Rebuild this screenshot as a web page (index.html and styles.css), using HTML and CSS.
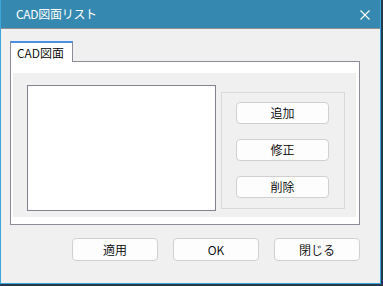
FILE: index.html
```html
<!DOCTYPE html>
<html>
<head>
    <title>CAD図面リスト</title>
    <meta charset="UTF-8">
    <link rel="stylesheet" href="styles.css">
</head>
<body>
    <div class="window">
        <div class="titlebar">
            <span class="title">CAD図面リスト</span>
            <svg class="close" width="10" height="10" viewBox="0 0 10 10">
                <path d="M0.5 0.5 L9.5 9.5 M9.5 0.5 L0.5 9.5" stroke="#ffffff" stroke-width="1.1" fill="none"/>
            </svg>
        </div>

        <div class="content">
            <div class="tabs">
                <div class="tab">CAD図面</div>
            </div>
            <div class="panel">
                <div class="panel-inner">
                    <div class="listbox"></div>
                    <div class="groupbox">
                        <button class="btn side-btn">追加</button>
                        <button class="btn side-btn">修正</button>
                        <button class="btn side-btn">削除</button>
                    </div>
                </div>
            </div>

            <div class="footer">
                <button class="btn foot-btn">適用</button>
                <button class="btn foot-btn">OK</button>
                <button class="btn foot-btn">閉じる</button>
            </div>
        </div>
    </div>
</body>
</html>
```

FILE: styles.css
```css
html, body {
    margin: 0;
    padding: 0;
}
body {
    background-color: #27394a;
    width: 383px;
    height: 286px;
    overflow: hidden;
    font-family: "Noto Sans CJK JP", "Liberation Sans", sans-serif;
    font-size: 12px;
}
.window {
    box-sizing: border-box;
    width: 381px;
    height: 284px;
    border: 1px solid #3aa6dc;
    border-top: none;
    background-color: #f0f0f0;
}
.titlebar {
    height: 28px;
    background-color: #3589b0;
    border-bottom: 1px solid #8a9197;
    display: flex;
    align-items: center;
    justify-content: space-between;
    padding: 0 10px 0 15px;
}
.title {
    color: #ffffff;
    font-size: 12px;
    letter-spacing: -0.3px;
    margin-top: -2px;
}
.close {
    display: block;
    margin-top: 2px;
}
.content {
    padding: 12px 0 0 9px;
}
.tabs {
    display: flex;
    height: 20px;
    position: relative;
    z-index: 1;
}
.tab {
    box-sizing: border-box;
    width: 63px;
    height: 21px;
    background-color: #ffffff;
    border-top: 2px solid #4c8fe6;
    border-left: 1px solid #8c8c96;
    border-right: 1px solid #8c8c96;
    padding-left: 6px;
    line-height: 19px;
    color: #000000;
    font-weight: 350;
}
.panel {
    box-sizing: border-box;
    width: 350px;
    height: 164px;
    background-color: #ffffff;
    border: 1px solid #8c8c96;
    padding: 11px 3px 7px 2px;
}
.panel-inner {
    height: 144px;
    background-color: #f0f0f0;
    display: flex;
    align-items: flex-start;
    padding: 12px 0 0 14px;
    box-sizing: border-box;
}
.listbox {
    box-sizing: border-box;
    width: 189px;
    height: 126px;
    background-color: #ffffff;
    border: 1px solid #82828c;
}
.groupbox {
    box-sizing: border-box;
    width: 124px;
    height: 117px;
    margin: 7px 0 0 5px;
    border: 1px solid #d9d9d9;
    display: flex;
    flex-direction: column;
    gap: 15px;
    padding: 9px 0 0 14px;
}
.btn {
    box-sizing: border-box;
    background-color: #fdfdfd;
    border: 1px solid #d0d0d0;
    border-radius: 4px;
    font-family: "Noto Sans CJK JP", "Liberation Sans", sans-serif;
    font-size: 12px;
    font-weight: 350;
    color: #000000;
    padding: 0;
}
.side-btn {
    width: 93px;
    height: 22px;
    line-height: 20px;
}
.footer {
    display: flex;
    gap: 15px;
    padding: 13px 0 0 62px;
}
.foot-btn {
    width: 86px;
    height: 23px;
    line-height: 21px;
}
```
